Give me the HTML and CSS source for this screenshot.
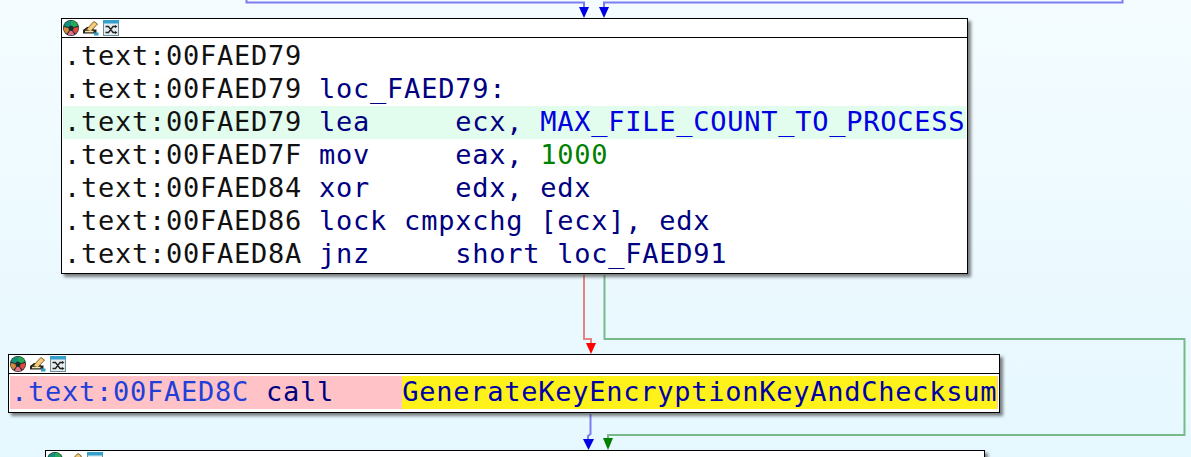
FILE: index.html
```html
<!DOCTYPE html>
<html lang="en">
<head>
<meta charset="utf-8">
<title>Graph view</title>
<link rel="stylesheet" href="styles.css">
</head>
<body>
<svg class="defs" width="0" height="0" aria-hidden="true">
  <symbol id="i-color" viewBox="0 0 16 16">
    <circle cx="8" cy="8" r="8" fill="#17302c"/>
    <path d="M8 .8A7.200 7.200 0 0 1 15 5.800L10.500 7.200A2.600 2.600 0 0 0 8 5.400Z" fill="#25a85a"/>
    <path d="M8 .8A7.200 7.200 0 0 0 1 5.800L5.500 7.200A2.600 2.600 0 0 1 8 5.400Z" fill="#168f78"/>
    <path d="M15.200 7A7.200 7.200 0 0 1 12.300 13.800L9.700 10.300A2.600 2.600 0 0 0 10.600 8Z" fill="#e0483f"/>
    <path d="M.8 7A7.200 7.200 0 0 0 3.700 13.800L6.300 10.300A2.600 2.600 0 0 1 5.400 8Z" fill="#d8863a"/>
    <path d="M4.700 14.500A7.200 7.200 0 0 0 11.300 14.500L9 10.800A2.600 2.600 0 0 1 7 10.800Z" fill="#ea6f8e"/>
  </symbol>
  <symbol id="i-pencil" viewBox="0 0 16 16">
    <path d="M0 13.500V10L4 7H8L11 9.500H13.500V13.500Z" fill="#25251c"/>
    <path d="M3.500 9.500L10.800 1.500L14.500 4L7.500 11.500Z" fill="#f5cc7d" stroke="#6e5018" stroke-width=".9"/>
    <path d="M2 10.800H10.500V12.300H2Z" fill="#efe2b4"/>
    <path d="M11 12.500H15.500V15.500H11Z" fill="#2f9ccc"/>
  </symbol>
  <symbol id="i-shuffle" viewBox="0 0 16 16">
    <rect x=".5" y=".5" width="15" height="15" fill="#e4ecef" stroke="#6f8c99"/>
    <rect x="0" y="0" width="16" height="3.500" fill="#34a0cc"/>
    <path d="M2.500 6.500H5.500L10 12.500H13M2.500 12.500H5.500L10 6.500H13" fill="none" stroke="#222" stroke-width="1.300"/>
    <path d="M12 5L14.500 6.500L12 8ZM12 11L14.500 12.500L12 14Z" fill="#222"/>
  </symbol>
</svg>

<main class="canvas">
  <svg class="edges" width="1191" height="457" viewBox="0 0 1191 457" aria-hidden="true">
    <path class="edge edge-blue" d="M246.500 0V2.500H584V8"/>
    <path class="edge edge-blue" d="M1122.500 0V2.500H604V8"/>
    <path class="tip tip-blue" d="M579 7H589L584 18Z"/>
    <path class="tip tip-blue" d="M599 7H609L604 18Z"/>
    <path class="edge edge-red" d="M584 275V339H591V344"/>
    <path class="tip tip-red" d="M586 343H596L591 354Z"/>
    <path class="edge edge-green" d="M604.500 275V339H1184.500V435H608V440"/>
    <path class="tip tip-green" d="M603 438H613L608 450Z"/>
    <path class="edge edge-blue" d="M590.500 414V434L588 436V440"/>
    <path class="tip tip-blue" d="M583 439H594L588.500 450Z"/>
  </svg>

  <section class="node node-a">
    <div class="titlebar">
      <svg class="icon"><use href="#i-color"/></svg>
      <svg class="icon"><use href="#i-pencil"/></svg>
      <svg class="icon"><use href="#i-shuffle"/></svg>
    </div>
    <div class="code">
      <div class="row">.text:00FAED79</div>
      <div class="row">.text:00FAED79 <span class="kw">loc_FAED79:</span></div>
      <div class="row row-current">.text:00FAED79 <span class="kw">lea     ecx, </span><span class="sym">MAX_FILE_COUNT_TO_PROCESS</span></div>
      <div class="row">.text:00FAED7F <span class="kw">mov     eax, </span><span class="num">1000</span></div>
      <div class="row">.text:00FAED84 <span class="kw">xor     edx, edx</span></div>
      <div class="row">.text:00FAED86 <span class="kw">lock cmpxchg [ecx], edx</span></div>
      <div class="row">.text:00FAED8A <span class="kw">jnz     short loc_FAED91</span></div>
    </div>
  </section>

  <section class="node node-b">
    <div class="titlebar">
      <svg class="icon"><use href="#i-color"/></svg>
      <svg class="icon"><use href="#i-pencil"/></svg>
      <svg class="icon"><use href="#i-shuffle"/></svg>
    </div>
    <div class="code">
      <div class="row row-break"><span class="addr">.text:00FAED8C</span> <span class="kw">call    </span><span class="mark">GenerateKeyEncryptionKeyAndChecksum</span></div>
    </div>
  </section>

  <section class="node node-c">
    <div class="titlebar">
      <svg class="icon"><use href="#i-color"/></svg>
      <svg class="icon"><use href="#i-pencil"/></svg>
      <svg class="icon"><use href="#i-shuffle"/></svg>
    </div>
  </section>
</main>
</body>
</html>
```
FILE: styles.css
```css
html, body {
  margin: 0;
  padding: 0;
  overflow: hidden;
}

.defs {
  position: absolute;
}

.canvas {
  position: relative;
  width: 1191px;
  height: 457px;
  overflow: hidden;
  background: linear-gradient(180deg, #f4fcff 0%, #e6f8ff 100%);
}

.edges {
  position: absolute;
  left: 0;
  top: 0;
}

.edge {
  fill: none;
  stroke-width: 2;
}

.edge-blue { stroke: #7d7df2; }
.edge-red { stroke: #e58484; }
.edge-green { stroke: #78b98a; }

.tip-blue { fill: #0000e6; }
.tip-red { fill: #ff0000; }
.tip-green { fill: #007f00; }

.node {
  position: absolute;
  box-sizing: border-box;
  background: #fff;
  border: 1px solid #000;
  box-shadow: 3px 3px 3px rgba(60, 60, 60, 0.65);
}

.node-a { left: 61px; top: 18px; width: 907px; height: 256px; }
.node-b { left: 8px; top: 354px; width: 992px; height: 59px; }
.node-c { left: 45px; top: 450px; width: 940px; height: 60px; }

.titlebar {
  display: flex;
  align-items: center;
  gap: 4px;
  height: 18px;
  padding-left: 1px;
  border-bottom: 1px solid #000;
}

.icon {
  width: 16px;
  height: 16px;
  flex: none;
}

.code {
  padding: 2px 1px;
}

.row {
  height: 33px;
  line-height: 31px;
  padding-left: 1px;
  font-family: "DejaVu Sans Mono", "Liberation Mono", monospace;
  font-size: 27px;
  letter-spacing: 0.75px;
  white-space: pre;
  color: #111;
}

.row-current { background: #e2fcee; }
.row-break { background: #ffc2c6; }

.kw { color: #000080; }
.sym { color: #0000e0; }
.num { color: #008000; }
.addr { color: #1f3fd8; }
.mark {
  display: inline-block;
  height: 33px;
  width: 595px;
  background: #fff21a;
  color: #0000a8;
  vertical-align: top;
}
```
